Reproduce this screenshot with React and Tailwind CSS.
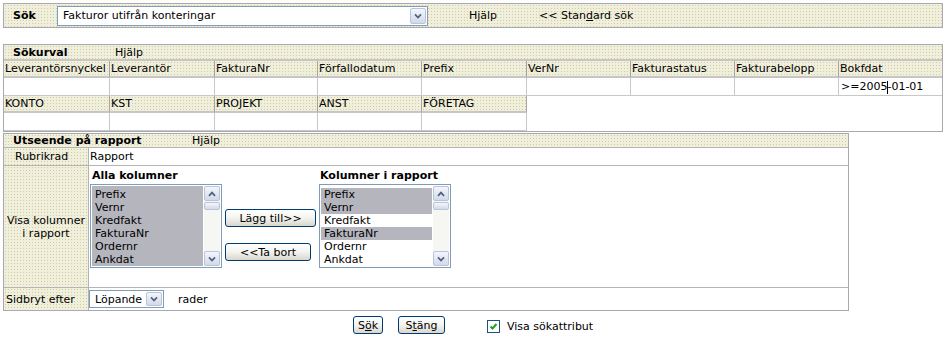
import React from 'react';

const beige =
  "bg-[#f0efdc] bg-[radial-gradient(circle,#cfcca6_0.7px,transparent_1px)] bg-[length:3px_3px]";

const Chevron = ({ up }) => (
  <svg width="8" height="6" viewBox="0 0 8 6">
    <path
      d={up ? "M1 4.8 L4 1.6 L7 4.8" : "M1 1.4 L4 4.6 L7 1.4"}
      fill="none"
      stroke="#4d6185"
      strokeWidth="1.7"
    />
  </svg>
);

const ArrowBtn = ({ up, className }) => (
  <div
    className={`${className} border border-[#b9c3d9] rounded-[2px] bg-gradient-to-b from-[#f4f6fb] to-[#d3d9e8] flex items-center justify-center`}
  >
    <Chevron up={up} />
  </div>
);

const Select = ({ box, text }) => (
  <div className={`${box} flex items-center border border-[#7f9db9] bg-white p-px`}>
    <span className="flex-1 pl-[4px] whitespace-nowrap overflow-hidden">{text}</span>
    <ArrowBtn className="w-[16px] h-full" />
  </div>
);

const XpButton = ({ box, children }) => (
  <div
    className={`${box} h-[18px] border border-[#003c74] rounded-[3px] bg-gradient-to-b from-white via-[#f3f3ef] to-[#d9d6cc] flex items-center justify-center whitespace-nowrap`}
  >
    {children}
  </div>
);

const ListBox = ({ items, selected, allGray }) => (
  <div className="w-[132px] h-[84px] border border-[#7f9db9] bg-white flex p-px">
    <div className={`flex-1 pt-[2px] ${allGray ? 'bg-[#b5b5bd]' : ''}`}>
      {items.map((it, i) => (
        <div
          key={it}
          className={`h-[13px] leading-[13px] pl-[3px] ${selected.includes(i) ? 'bg-[#b5b5bd]' : ''}`}
        >
          {it}
        </div>
      ))}
    </div>
    <div className="w-[16px] h-full flex flex-col bg-[#f6f6f3] ml-px">
      <ArrowBtn up className="h-[15px] w-full" />
      <div className="h-[8px] w-full mt-px border border-[#b9c3d9] rounded-[2px] bg-gradient-to-b from-[#f4f6fb] to-[#d3d9e8]" />
      <div className="flex-1" />
      <ArrowBtn className="h-[15px] w-full" />
    </div>
  </div>
);

const row1 = ['Leverantörsnyckel', 'Leverantör', 'FakturaNr', 'Förfallodatum', 'Prefix', 'VerNr', 'Fakturastatus', 'Fakturabelopp', 'Bokfdat'];
const row2 = ['KONTO', 'KST', 'PROJEKT', 'ANST', 'FÖRETAG'];
const cols = ['Prefix', 'Vernr', 'Kredfakt', 'FakturaNr', 'Ordernr', 'Ankdat'];

const Head = ({ children, last }) => (
  <div
    className={`h-[17px] leading-[15px] pl-px border-b-2 border-b-[#c6c6c6] ${last ? '' : 'border-r border-r-[#a4a4a4]'} ${beige} whitespace-nowrap overflow-hidden`}
  >
    {children}
  </div>
);

const Input = ({ children, last }) => (
  <div
    className={`h-[18px] leading-[17px] pl-[2px] bg-white border-b border-b-[#c8c8c8] ${last ? '' : 'border-r border-r-[#c8c8c8]'} whitespace-nowrap`}
  >
    {children}
  </div>
);

export default function App() {
  return (
    <div className="w-[949px] h-[340px] bg-white text-black text-[11px] leading-[13px] font-['DejaVu_Sans',Verdana,sans-serif] pt-[3px] pl-[3px]">
      {/* Sök bar */}
      <div className={`w-[940px] h-[25px] border border-[#a9a9b2] flex items-center ${beige}`}>
        <div className="w-[53px] pl-[9px] font-bold">Sök</div>
        <Select box="w-[371px] h-[20px]" text="Fakturor utifrån konteringar" />
        <span className="ml-[41px]">Hjälp</span>
        <span className="ml-[42px]">
          &lt;&lt; Stan<span className="underline">d</span>ard sök
        </span>
      </div>

      {/* Sökurval */}
      <div className="mt-[16px] w-[940px] border border-[#a9a9b2]">
        <div className={`h-[16px] flex items-center border-b-2 border-[#c6c6c6] ${beige}`}>
          <span className="w-[111px] pl-[9px] font-bold">Sökurval</span>
          <span>Hjälp</span>
        </div>
        <div className="grid grid-cols-[106px_105px_103px_104px_105px_104px_104px_104px_103px]">
          {row1.map((h, i) => (
            <Head key={h} last={i === 8}>{h}</Head>
          ))}
          {row1.map((h, i) => (
            <Input key={h} last={i === 8}>
              {h === 'Bokfdat' ? (
                <>
                  &gt;=2005<span className="inline-block w-px h-[13px] bg-black align-middle -mr-px" />-01-01
                </>
              ) : null}
            </Input>
          ))}
          {row2.map((h) => (
            <Head key={h}>{h}</Head>
          ))}
          <div className="col-span-4 row-span-2 bg-white" />
          {row2.map((h) => (
            <Input key={h} />
          ))}
        </div>
      </div>

      {/* Utseende på rapport */}
      <div className="mt-px w-[846px] border border-[#a9a9b2]">
        <div className={`h-[14px] flex items-center border-b border-[#b4b4b4] ${beige}`}>
          <span className="w-[188px] pl-[9px] font-bold">Utseende på rapport</span>
          <span>Hjälp</span>
        </div>
        <div className="flex h-[18px] border-b border-[#b4b4b4]">
          <div className={`w-[85px] border-r border-[#b4b4b4] pl-[11px] flex items-center ${beige}`}>Rubrikrad</div>
          <div className="flex-1 bg-white pl-px flex items-center">Rapport</div>
        </div>
        <div className="flex h-[122px] border-b border-[#b4b4b4]">
          <div className={`w-[85px] border-r border-[#b4b4b4] flex items-center justify-center text-center ${beige}`}>
            Visa kolumner
            <br />
            i rapport
          </div>
          <div className="flex-1 bg-white pl-px pt-[3px] flex">
            <div>
              <div className="h-[15px] font-bold pl-[2px]">Alla kolumner</div>
              <ListBox items={cols} selected={[0, 1, 2, 3, 4, 5]} allGray />
            </div>
            <div className="ml-[3px] pt-[40px] flex flex-col gap-[16px]">
              <XpButton box="w-[91px]">Lägg till&gt;&gt;</XpButton>
              <XpButton box="w-[86px]">&lt;&lt;Ta bort</XpButton>
            </div>
            <div className="ml-[3px]">
              <div className="h-[15px] font-bold pl-px">Kolumner i rapport</div>
              <ListBox items={cols} selected={[0, 1, 3]} />
            </div>
          </div>
        </div>
        <div className="flex h-[22px]">
          <div className={`w-[85px] border-r border-[#b4b4b4] pl-[2px] flex items-center ${beige}`}>Sidbryt efter</div>
          <div className="flex-1 bg-white flex items-center">
            <Select box="w-[75px] h-[18px]" text="Löpande" />
            <span className="ml-[14px]">rader</span>
          </div>
        </div>
      </div>

      {/* Bottom buttons */}
      <div className="mt-[5px] flex items-center h-[18px]">
        <XpButton box="ml-[350px] w-[30px]">
          S<span className="underline">ö</span>k
        </XpButton>
        <XpButton box="ml-[15px] w-[47px]">
          S<span className="underline">t</span>äng
        </XpButton>
        <div className="ml-[42px] mt-[3px] w-[13px] h-[13px] border border-[#1c5180] bg-white flex items-center justify-center">
          <svg width="9" height="9" viewBox="0 0 9 9">
            <path d="M1.5 4.5 L3.5 6.5 L7.5 2" fill="none" stroke="#21a121" strokeWidth="2" />
          </svg>
        </div>
        <span className="ml-[7px] mt-[3px]">Visa sökattribut</span>
      </div>
    </div>
  );
}
